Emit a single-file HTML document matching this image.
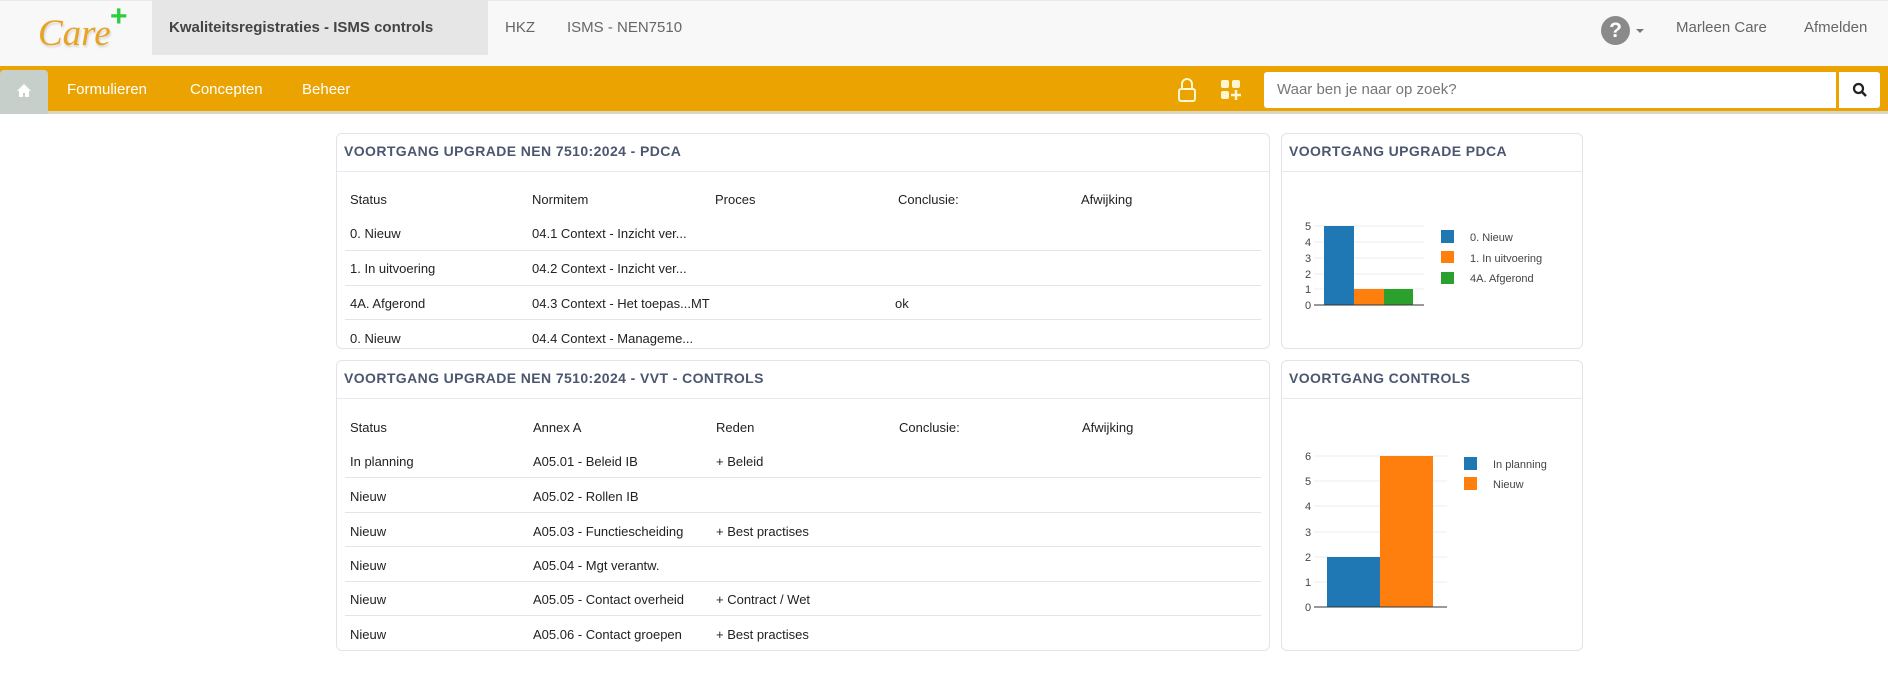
<!DOCTYPE html>
<html><head><meta charset="utf-8"><style>
*{margin:0;padding:0;box-sizing:border-box}
body{width:1888px;height:685px;background:#fff;font-family:"Liberation Sans",sans-serif;position:relative;overflow:hidden;color:#222}
.abs{position:absolute}
#top{left:0;top:0;width:1888px;height:66px;background:#f8f8f8;border-top:1px solid #e8e8e8}
#tab{left:152px;top:0;width:336px;height:55px;background:#e6e6e6}
.tn{font-size:15px;color:#666;top:19px;white-space:nowrap}
#nav{left:0;top:66px;width:1888px;height:48px;background:#eaa300;border-bottom:3px solid #d9d4c4}
.nl{color:#fff;font-size:15px;top:81px}
.panel{position:absolute;border:1px solid #e1e4ea;border-radius:6px;background:#fff}
.ph{height:38px;border-bottom:1px solid #e6e9ee;font-weight:bold;font-size:14px;color:#4b566f;letter-spacing:.4px;padding:9px 0 0 7px;white-space:nowrap}
.t{font-size:13px;position:absolute;white-space:nowrap}
.sep{position:absolute;left:8px;right:8px;height:1px;background:#e4e4e4}
</style></head><body>
<div id="top" class="abs"></div>
<div id="tab" class="abs"></div>
<div class="abs" style="left:38px;top:12px;font-family:'Liberation Serif',serif;font-style:italic;font-size:37px;color:#e9a322;text-shadow:1px 2px 2px rgba(0,0,0,.15)">Care</div>
<div class="abs" style="left:110px;top:0px;font-size:30px;font-weight:bold;color:#2ecc40">+</div>
<div class="abs tn" style="left:169px;color:#444;font-weight:bold">Kwaliteitsregistraties - ISMS controls</div>
<div class="abs tn" style="left:505px">HKZ</div>
<div class="abs tn" style="left:567px">ISMS - NEN7510</div>
<div class="abs" style="left:1601px;top:16px;width:29px;height:29px;border-radius:50%;background:#8a8a8a;color:#fff;font-weight:bold;font-size:21px;text-align:center;line-height:29px">?</div>
<div class="abs" style="left:1636px;top:29px;border:4px solid transparent;border-top:4px solid #777"></div>
<div class="abs tn" style="left:1676px">Marleen Care</div>
<div class="abs tn" style="left:1804px">Afmelden</div>
<div id="nav" class="abs"></div>
<div class="abs" style="left:0;top:70px;width:48px;height:44px;background:#c7cfcb;border-radius:4px 4px 0 0"></div>
<svg class="abs" style="left:16px;top:83px" width="16" height="15" viewBox="0 0 16 15"><path d="M8 1L1 8h2v6h4v-4h2v4h4V8h2z" fill="#fff"/></svg>
<div class="abs nl" style="left:67px">Formulieren</div>
<div class="abs nl" style="left:190px">Concepten</div>
<div class="abs nl" style="left:302px">Beheer</div>
<svg class="abs" style="left:1177px;top:77px" width="20" height="26" viewBox="0 0 20 26"><path d="M5 12V7a5 5 0 0 1 10 0v5" fill="none" stroke="#fff5d0" stroke-width="2"/><rect x="2" y="12" width="16" height="12" rx="2" fill="none" stroke="#fff5d0" stroke-width="2"/></svg>
<svg class="abs" style="left:1220px;top:79px" width="22" height="22" viewBox="0 0 22 22"><rect x="1" y="1" width="8" height="8" rx="2" fill="#fff5d0"/><rect x="12" y="1" width="8" height="8" rx="2" fill="#fff5d0"/><rect x="1" y="12" width="8" height="8" rx="2" fill="#fff5d0"/><path d="M16 11v10M11 16h10" stroke="#fff5d0" stroke-width="2.5"/></svg>
<div class="abs" style="left:1264px;top:72px;width:572px;height:36px;background:#fff;border-radius:3px 0 0 3px;font-size:15px;color:#777;padding:9px 0 0 13px">Waar ben je naar op zoek?</div>
<div class="abs" style="left:1839px;top:72px;width:41px;height:36px;background:#fff;border-radius:0 3px 3px 0"></div>
<svg class="abs" style="left:1852px;top:82px" width="16" height="16" viewBox="0 0 16 16"><circle cx="6.5" cy="6.5" r="4.5" fill="none" stroke="#222" stroke-width="2.2"/><path d="M10 10l4 4" stroke="#222" stroke-width="2.5"/></svg>

<div class="panel" style="left:336px;top:133px;width:934px;height:216px">
<div class="ph">VOORTGANG UPGRADE NEN 7510:2024 - PDCA</div>
<div class="t" style="left:13px;top:58px">Status</div><div class="t" style="left:195px;top:58px">Normitem</div><div class="t" style="left:378px;top:58px">Proces</div><div class="t" style="left:561px;top:58px">Conclusie:</div><div class="t" style="left:744px;top:58px">Afwijking</div>
<div class="t" style="left:13px;top:92px">0. Nieuw</div><div class="t" style="left:195px;top:92px">04.1 Context - Inzicht ver...</div>
<div class="sep" style="top:116px"></div>
<div class="t" style="left:13px;top:127px">1. In uitvoering</div><div class="t" style="left:195px;top:127px">04.2 Context - Inzicht ver...</div>
<div class="sep" style="top:151px"></div>
<div class="t" style="left:13px;top:162px">4A. Afgerond</div><div class="t" style="left:195px;top:162px">04.3 Context - Het toepas...MT</div><div class="t" style="left:558px;top:162px">ok</div>
<div class="sep" style="top:185px"></div>
<div class="t" style="left:13px;top:197px">0. Nieuw</div><div class="t" style="left:195px;top:197px">04.4 Context - Manageme...</div>
</div>

<div class="panel" style="left:1281px;top:133px;width:302px;height:216px">
<div class="ph">VOORTGANG UPGRADE PDCA</div>
</div>
<svg class="abs" style="left:1281px;top:133px" width="302" height="216" font-family="Liberation Sans, sans-serif" font-size="11" fill="#444">
<g stroke="#eee"><line x1="33" x2="143" y1="93" y2="93"/><line x1="33" x2="143" y1="109" y2="109"/><line x1="33" x2="143" y1="125" y2="125"/><line x1="33" x2="143" y1="141" y2="141"/><line x1="33" x2="143" y1="156" y2="156"/></g>
<rect x="43" y="93" width="30" height="79" fill="#1f77b4"/><rect x="73" y="156" width="30" height="16" fill="#ff7f0e"/><rect x="103" y="156" width="29" height="16" fill="#2ca02c"/>
<line x1="33" x2="143" y1="172" y2="172" stroke="#333"/>
<text x="24" y="97">5</text><text x="24" y="113">4</text><text x="24" y="129">3</text><text x="24" y="145">2</text><text x="24" y="160">1</text><text x="24" y="176">0</text>
<rect x="160" y="97" width="13" height="13" fill="#1f77b4"/><rect x="160" y="118" width="13" height="12" fill="#ff7f0e"/><rect x="160" y="139" width="13" height="12" fill="#2ca02c"/>
<text x="189" y="108">0. Nieuw</text><text x="189" y="129">1. In uitvoering</text><text x="189" y="149">4A. Afgerond</text>
</svg>

<div class="panel" style="left:336px;top:360px;width:934px;height:291px">
<div class="ph">VOORTGANG UPGRADE NEN 7510:2024 - VVT - CONTROLS</div>
<div class="t" style="left:13px;top:59px">Status</div><div class="t" style="left:196px;top:59px">Annex A</div><div class="t" style="left:379px;top:59px">Reden</div><div class="t" style="left:562px;top:59px">Conclusie:</div><div class="t" style="left:745px;top:59px">Afwijking</div>
<div class="t" style="left:13px;top:93px">In planning</div><div class="t" style="left:196px;top:93px">A05.01 - Beleid IB</div><div class="t" style="left:379px;top:93px">+ Beleid</div>
<div class="sep" style="top:116px"></div>
<div class="t" style="left:13px;top:128px">Nieuw</div><div class="t" style="left:196px;top:128px">A05.02 - Rollen IB</div>
<div class="sep" style="top:151px"></div>
<div class="t" style="left:13px;top:163px">Nieuw</div><div class="t" style="left:196px;top:163px">A05.03 - Functiescheiding</div><div class="t" style="left:379px;top:163px">+ Best practises</div>
<div class="sep" style="top:185px"></div>
<div class="t" style="left:13px;top:197px">Nieuw</div><div class="t" style="left:196px;top:197px">A05.04 - Mgt verantw.</div>
<div class="sep" style="top:220px"></div>
<div class="t" style="left:13px;top:231px">Nieuw</div><div class="t" style="left:196px;top:231px">A05.05 - Contact overheid</div><div class="t" style="left:379px;top:231px">+ Contract / Wet</div>
<div class="sep" style="top:254px"></div>
<div class="t" style="left:13px;top:266px">Nieuw</div><div class="t" style="left:196px;top:266px">A05.06 - Contact groepen</div><div class="t" style="left:379px;top:266px">+ Best practises</div>
</div>

<div class="panel" style="left:1281px;top:360px;width:302px;height:291px">
<div class="ph">VOORTGANG CONTROLS</div>
</div>
<svg class="abs" style="left:1281px;top:360px" width="302" height="291" font-family="Liberation Sans, sans-serif" font-size="11" fill="#444">
<g stroke="#eee"><line x1="33" x2="166" y1="96" y2="96"/><line x1="33" x2="166" y1="121" y2="121"/><line x1="33" x2="166" y1="146" y2="146"/><line x1="33" x2="166" y1="172" y2="172"/><line x1="33" x2="166" y1="197" y2="197"/><line x1="33" x2="166" y1="222" y2="222"/></g>
<rect x="46" y="197" width="53" height="50" fill="#1f77b4"/><rect x="99" y="96" width="53" height="151" fill="#ff7f0e"/>
<line x1="33" x2="166" y1="247" y2="247" stroke="#333"/>
<text x="24" y="100">6</text><text x="24" y="125">5</text><text x="24" y="150">4</text><text x="24" y="176">3</text><text x="24" y="201">2</text><text x="24" y="226">1</text><text x="24" y="251">0</text>
<rect x="183" y="97" width="13" height="13" fill="#1f77b4"/><rect x="183" y="117" width="13" height="13" fill="#ff7f0e"/>
<text x="212" y="108">In planning</text><text x="212" y="128">Nieuw</text>
</svg>
</body></html>
